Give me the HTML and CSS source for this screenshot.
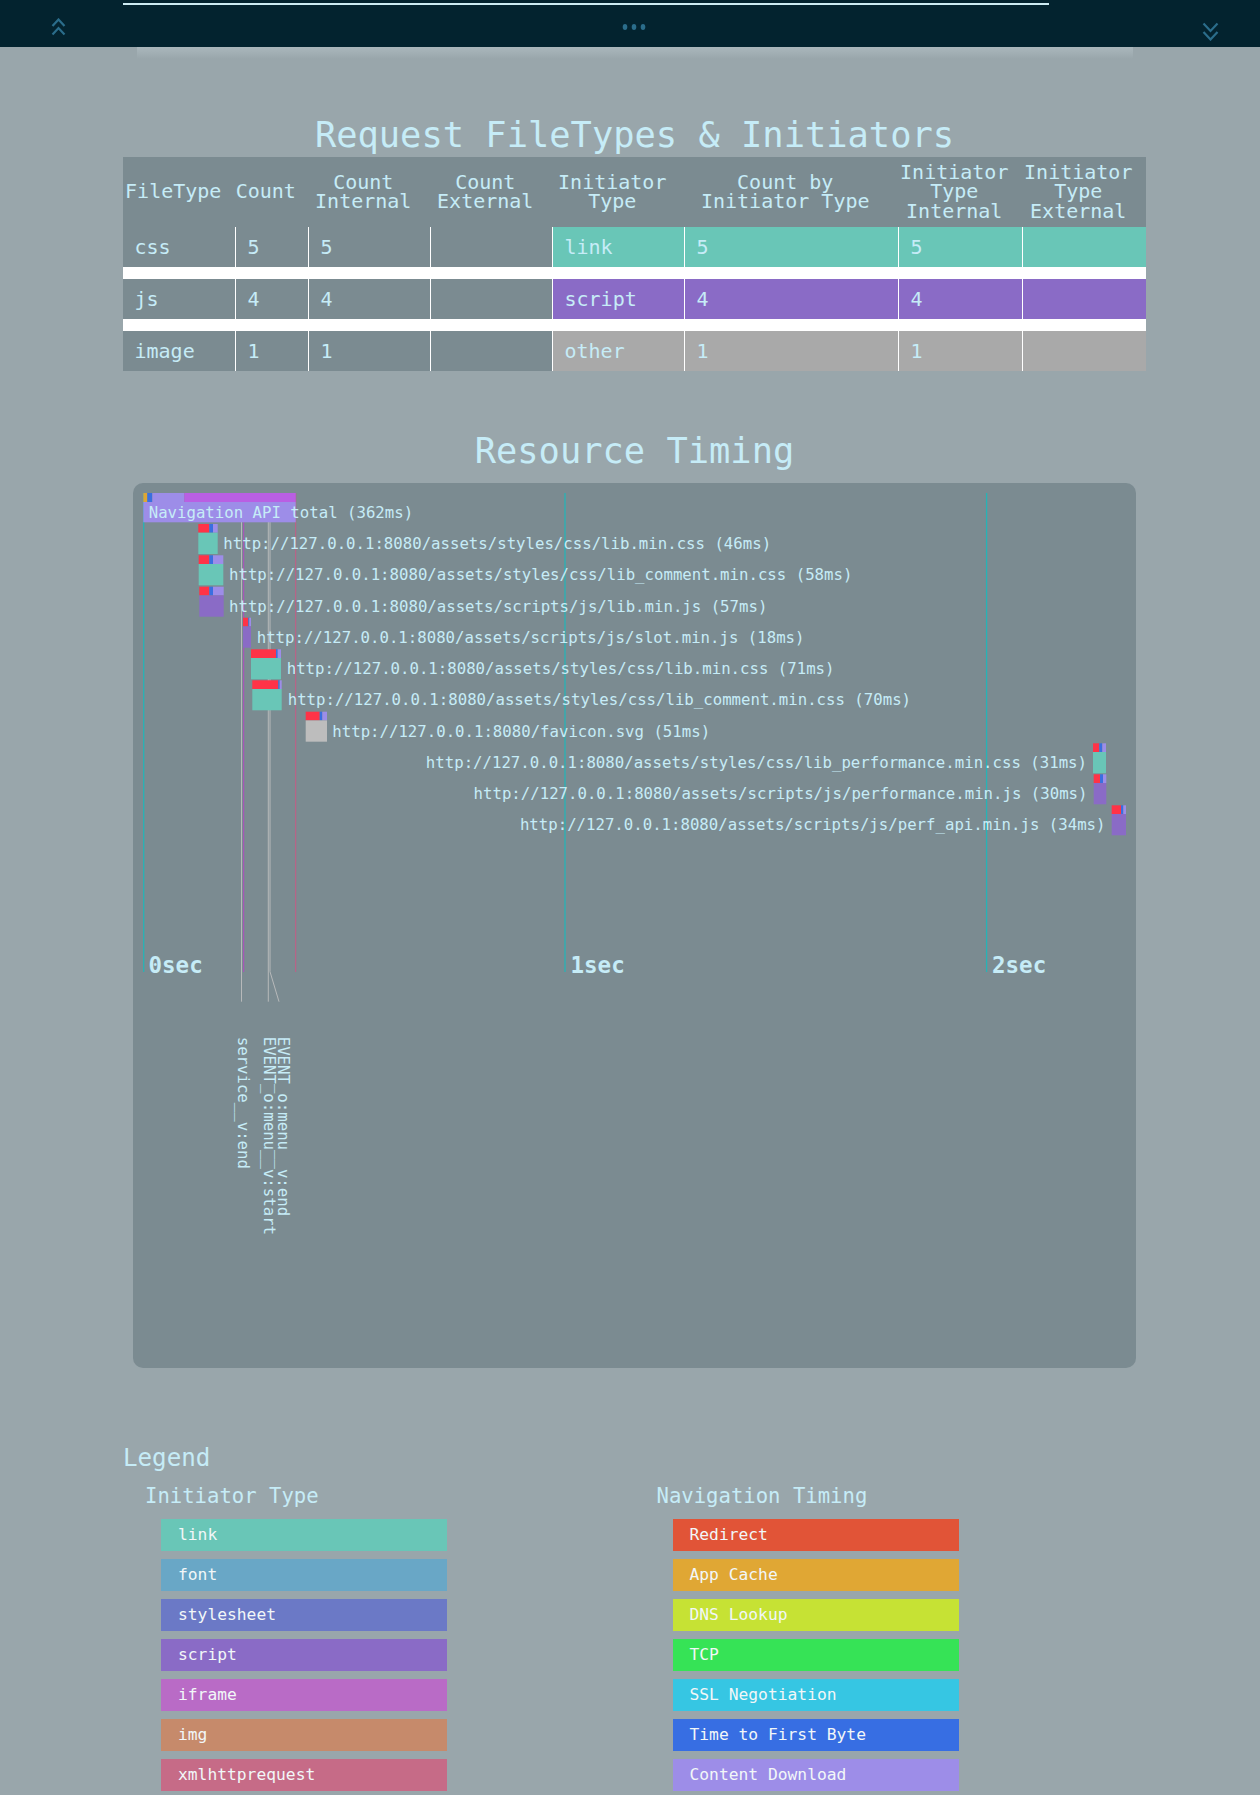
FILE: index.html
```html
<!DOCTYPE html>
<html lang="en">
<head>
<meta charset="utf-8">
<title>Performance</title>
<link rel="stylesheet" href="styles.css">
</head>
<body>
<header class="topbar">
  <div class="progress"></div>
  <div class="bar-row">
    <svg class="ic-up" viewBox="0 0 15 18"><path d="M1.5 8 L7.5 1.5 L13.5 8 M1.5 16.5 L7.5 10 L13.5 16.5" fill="none" stroke="#2b6d8b" stroke-width="2.2"/></svg>
    <svg class="ic-dots" viewBox="0 0 24 6"><ellipse cx="3" cy="3" rx="2.3" ry="3" fill="#2b6d8b"/><ellipse cx="12" cy="3" rx="2.3" ry="3" fill="#2b6d8b"/><ellipse cx="21" cy="3" rx="2.3" ry="3" fill="#2b6d8b"/></svg>
    <svg class="ic-down" viewBox="0 0 17 19"><path d="M1.5 1.5 L8.5 9 L15.5 1.5 M1.5 10 L8.5 17.5 L15.5 10" fill="none" stroke="#2b6d8b" stroke-width="2.2"/></svg>
  </div>
</header>
<div class="glow"></div>
<main class="content">
  <h2 class="title first">Request FileTypes &amp; Initiators</h2>
  <table class="types">
    <colgroup>
      <col class="c1"><col class="c2"><col class="c3"><col class="c4"><col class="c5"><col class="c6"><col class="c7"><col class="c8">
    </colgroup>
    <thead>
      <tr>
        <th>FileType</th><th>Count</th><th>Count Internal</th><th>Count External</th><th>Initiator Type</th><th>Count by Initiator Type</th><th>Initiator Type Internal</th><th>Initiator Type External</th>
      </tr>
    </thead>
    <tbody>
      <tr><td>css</td><td>5</td><td>5</td><td></td><td class="link">link</td><td class="link">5</td><td class="link">5</td><td class="link"></td></tr>
      <tr><td>js</td><td>4</td><td>4</td><td></td><td class="script">script</td><td class="script">4</td><td class="script">4</td><td class="script"></td></tr>
      <tr><td>image</td><td>1</td><td>1</td><td></td><td class="other">other</td><td class="other">1</td><td class="other">1</td><td class="other"></td></tr>
    </tbody>
  </table>

  <h2 class="title second">Resource Timing</h2>
  <div class="timeline">
    <svg class="chart" width="1003" height="885" viewBox="133 483 1003 885">
      <g class="marks">
        <line x1="143.7" y1="493" x2="143.7" y2="972" stroke="#27b3b6" stroke-width="1.3"/>
        <line x1="565" y1="493" x2="565" y2="972" stroke="#27b3b6" stroke-width="1.3"/>
        <line x1="986.6" y1="493" x2="986.6" y2="972" stroke="#27b3b6" stroke-width="1.3"/>
        <line x1="241.5" y1="493" x2="241.5" y2="1001.7" stroke="#b7b9ba" stroke-width="1"/>
        <line x1="243.7" y1="493" x2="243.7" y2="972" stroke="#b04dc2" stroke-width="1"/>
        <line x1="268.3" y1="493" x2="268.3" y2="1001.7" stroke="#b7b9ba" stroke-width="1"/>
        <polyline points="270,493 270,971.7 279,1001.7" fill="none" stroke="#b7b9ba" stroke-width="1"/>
        <line x1="295.7" y1="493" x2="295.7" y2="972" stroke="#c45c86" stroke-width="1"/>
      </g>

      <!-- navigation -->
      <rect x="143.3" y="493" width="4" height="9" fill="#e0a534"/>
      <rect x="147.3" y="493" width="5" height="9" fill="#3a6fe0"/>
      <rect x="152.3" y="493" width="32" height="9" fill="#9d8de8"/>
      <rect x="184.3" y="493" width="111.4" height="9" fill="#b95fe3"/>
      <rect x="143.3" y="502" width="152.4" height="20.3" fill="#9d8de8"/>
      <text class="lbl" x="148.7" y="517.5">Navigation API total (362ms)</text>

      <!-- row 1 -->
      <rect x="198.3" y="524" width="11" height="8.7" fill="#ff3347"/>
      <rect x="209.3" y="524" width="3.7" height="8.7" fill="#3a6fe0"/>
      <rect x="213" y="524" width="4.7" height="8.7" fill="#9d8de8"/>
      <rect x="198.3" y="532.7" width="19.4" height="21.3" fill="#69c6b7"/>
      <text class="lbl" x="223.3" y="549">http://127.0.0.1:8080/assets/styles/css/lib.min.css (46ms)</text>

      <!-- row 2 -->
      <rect x="198.7" y="555.3" width="10.6" height="8.7" fill="#ff3347"/>
      <rect x="209.3" y="555.3" width="3.7" height="8.7" fill="#3a6fe0"/>
      <rect x="213" y="555.3" width="10.3" height="8.7" fill="#9d8de8"/>
      <rect x="198.7" y="564" width="24.6" height="21.3" fill="#69c6b7"/>
      <text class="lbl" x="229" y="580.3">http://127.0.0.1:8080/assets/styles/css/lib_comment.min.css (58ms)</text>

      <!-- row 3 -->
      <rect x="199.3" y="586.7" width="10" height="8.7" fill="#ff3347"/>
      <rect x="209.3" y="586.7" width="3.7" height="8.7" fill="#3a6fe0"/>
      <rect x="213" y="586.7" width="10.7" height="8.7" fill="#9d8de8"/>
      <rect x="199.3" y="595.4" width="24.4" height="21.3" fill="#8a6bc6"/>
      <text class="lbl" x="229" y="611.7">http://127.0.0.1:8080/assets/scripts/js/lib.min.js (57ms)</text>

      <!-- row 4 -->
      <rect x="243" y="617.7" width="5.3" height="8.7" fill="#ff3347"/>
      <rect x="248.3" y="617.7" width="1" height="8.7" fill="#3a6fe0"/>
      <rect x="249.3" y="617.7" width="1.7" height="8.7" fill="#9d8de8"/>
      <rect x="243" y="626.4" width="8" height="21.3" fill="#8a6bc6"/>
      <text class="lbl" x="256.7" y="642.7">http://127.0.0.1:8080/assets/scripts/js/slot.min.js (18ms)</text>

      <!-- row 5 -->
      <rect x="251" y="649.3" width="25" height="8.7" fill="#ff3347"/>
      <rect x="276" y="649.3" width="1.7" height="8.7" fill="#3a6fe0"/>
      <rect x="277.7" y="649.3" width="3.3" height="8.7" fill="#9d8de8"/>
      <rect x="251" y="658" width="30" height="21.3" fill="#69c6b7"/>
      <text class="lbl" x="286.7" y="674.3">http://127.0.0.1:8080/assets/styles/css/lib.min.css (71ms)</text>

      <!-- row 6 -->
      <rect x="252.3" y="680.3" width="26" height="8.7" fill="#ff3347"/>
      <rect x="278.3" y="680.3" width="1.4" height="8.7" fill="#3a6fe0"/>
      <rect x="279.7" y="680.3" width="2" height="8.7" fill="#9d8de8"/>
      <rect x="252.3" y="689" width="29.4" height="21.3" fill="#69c6b7"/>
      <text class="lbl" x="287.7" y="705.3">http://127.0.0.1:8080/assets/styles/css/lib_comment.min.css (70ms)</text>

      <!-- row 7 -->
      <rect x="305.7" y="711.7" width="14" height="8.7" fill="#ff3347"/>
      <rect x="319.7" y="711.7" width="2.6" height="8.7" fill="#3a6fe0"/>
      <rect x="322.3" y="711.7" width="4.7" height="8.7" fill="#9d8de8"/>
      <rect x="305.7" y="720.4" width="21.3" height="21.3" fill="#bdbdbd"/>
      <text class="lbl" x="332.3" y="736.7">http://127.0.0.1:8080/favicon.svg (51ms)</text>

      <!-- row 8 -->
      <rect x="1093" y="743.3" width="6.3" height="8.7" fill="#ff3347"/>
      <rect x="1099.3" y="743.3" width="3" height="8.7" fill="#3a6fe0"/>
      <rect x="1102.3" y="743.3" width="3.7" height="8.7" fill="#9d8de8"/>
      <rect x="1093" y="752" width="13" height="21.3" fill="#69c6b7"/>
      <text class="lbl end" x="1087" y="768.3">http://127.0.0.1:8080/assets/styles/css/lib_performance.min.css (31ms)</text>

      <!-- row 9 -->
      <rect x="1093.7" y="774.3" width="6.3" height="8.7" fill="#ff3347"/>
      <rect x="1100" y="774.3" width="3" height="8.7" fill="#3a6fe0"/>
      <rect x="1103" y="774.3" width="3.3" height="8.7" fill="#9d8de8"/>
      <rect x="1093.7" y="783" width="12.6" height="21.3" fill="#8a6bc6"/>
      <text class="lbl end" x="1087.5" y="799.3">http://127.0.0.1:8080/assets/scripts/js/performance.min.js (30ms)</text>

      <!-- row 10 -->
      <rect x="1111.7" y="805.3" width="9.3" height="8.7" fill="#ff3347"/>
      <rect x="1121" y="805.3" width="2.3" height="8.7" fill="#3a6fe0"/>
      <rect x="1123.3" y="805.3" width="2.7" height="8.7" fill="#9d8de8"/>
      <rect x="1111.7" y="814" width="14.3" height="21.3" fill="#8a6bc6"/>
      <text class="lbl end" x="1105.5" y="830.3">http://127.0.0.1:8080/assets/scripts/js/perf_api.min.js (34ms)</text>

      <!-- seconds -->
      <text class="sec" x="148.5" y="973">0sec</text>
      <text class="sec" x="570.5" y="973">1sec</text>
      <text class="sec" x="992" y="973">2sec</text>

      <!-- marks labels -->
      <text class="lbl mark" transform="translate(238 1036.7) rotate(90)">service__v:end</text>
      <text class="lbl mark" transform="translate(264 1036.7) rotate(90)">EVENT_o:menu__v:start</text>
      <text class="lbl mark" transform="translate(277.5 1036.7) rotate(90)">EVENT_o:menu__v:end</text>
    </svg>
  </div>

  <section class="legend">
    <h3 class="legend-title">Legend</h3>
    <div class="legend-cols">
      <div class="legend-col">
        <h4 class="legend-sub">Initiator Type</h4>
        <ul class="legend-list">
          <li class="li-link">link</li>
          <li class="li-font">font</li>
          <li class="li-stylesheet">stylesheet</li>
          <li class="li-script">script</li>
          <li class="li-iframe">iframe</li>
          <li class="li-img">img</li>
          <li class="li-xhr">xmlhttprequest</li>
        </ul>
      </div>
      <div class="legend-col">
        <h4 class="legend-sub">Navigation Timing</h4>
        <ul class="legend-list">
          <li class="li-redirect">Redirect</li>
          <li class="li-appcache">App Cache</li>
          <li class="li-dns">DNS Lookup</li>
          <li class="li-tcp">TCP</li>
          <li class="li-ssl">SSL Negotiation</li>
          <li class="li-ttfb">Time to First Byte</li>
          <li class="li-download">Content Download</li>
        </ul>
      </div>
    </div>
  </section>
</main>
</body>
</html>
```

FILE: styles.css
```css
* { box-sizing: border-box; }

body {
  margin: 0;
  background: #99a6ab;
  color: #c6ecf7;
  font-family: "DejaVu Sans Mono", "Liberation Mono", monospace;
}

.topbar {
  height: 47px;
  background: #03232f;
  overflow: hidden;
}

.progress {
  margin: 3px 0 0 123px;
  width: 926px;
  height: 2px;
  background: #cdebf3;
}

.bar-row {
  display: flex;
  justify-content: space-between;
  align-items: flex-start;
  padding: 0 41px 0 51px;
}

.ic-up { display: block; width: 15px; height: 18px; margin-top: 13px; }
.ic-dots { display: block; width: 24px; height: 6px; margin-top: 19px; }
.ic-down { display: block; width: 17px; height: 19px; margin-top: 17px; }

.glow {
  height: 12px;
  margin: 0 127px 0 137px;
  background: linear-gradient(#aab7bc, rgba(153, 166, 171, 0));
}

.content {
  margin-left: 123px;
  width: 1023px;
}

.title {
  margin: 0;
  font-size: 35.4px;
  line-height: 42px;
  font-weight: normal;
  text-align: center;
}

.title.first { margin-top: 54.5px; }
.title.second { margin-top: 58.75px; }

.types {
  margin-top: 1.5px;
  width: 1023px;
  table-layout: fixed;
  border-collapse: separate;
  border-spacing: 0;
  background: #7b8b91;
  font-size: 20px;
}

.c1 { width: 112px; }
.c2 { width: 73px; }
.c3 { width: 122px; }
.c4 { width: 122px; }
.c5 { width: 132px; }
.c6 { width: 214px; }
.c7 { width: 124px; }
.c8 { width: 124px; }

.types th {
  height: 70px;
  padding: 0 11.5px 0 0;
  font-weight: normal;
  line-height: 19.3px;
  text-align: center;
  vertical-align: middle;
}

.types td {
  height: 40px;
  padding: 0 0 0 11.5px;
  text-align: left;
  vertical-align: middle;
  line-height: 24px;
}

.types tbody tr + tr td { border-top: 12px solid #fff; height: 52px; }
.types td + td { border-left: 1px solid #fff; }

.types td.link { background: #69c6b7; }
.types td.script { background: #8a6bc6; }
.types td.other { background: #a9a9a9; }

.timeline {
  margin: 11.25px 10px 0;
  height: 885px;
  background: #7b8b91;
  border-radius: 10px;
  overflow: hidden;
}

.chart { display: block; }

.lbl {
  font-family: "DejaVu Sans Mono", "Liberation Mono", monospace;
  font-size: 15.7px;
  fill: #c6ecf7;
}

.lbl.end { text-anchor: end; }

.sec {
  font-family: "DejaVu Sans Mono", "Liberation Mono", monospace;
  font-size: 22.5px;
  font-weight: bold;
  fill: #c6ecf7;
}

.legend { margin-top: 76.4px; }

.legend-title {
  margin: 0;
  font-size: 24.2px;
  line-height: 29px;
  font-weight: normal;
}

.legend-cols {
  display: grid;
  grid-template-columns: 1fr 1fr;
}

.legend-sub {
  margin: 10.8px 0 0;
  padding-left: 22px;
  font-size: 20.6px;
  line-height: 24px;
  font-weight: normal;
}

.legend-list {
  list-style: none;
  margin: 10.8px 0 0;
  padding: 0 0 0 38px;
}

.legend-list li {
  width: 286px;
  height: 31.7px;
  margin-bottom: 8.3px;
  padding-left: 17px;
  font-size: 16.3px;
  line-height: 31.7px;
  color: #f2f7f8;
}

.li-link { background: #69c6b7; }
.li-font { background: #69a7c6; }
.li-stylesheet { background: #6b79c6; }
.li-script { background: #8a6bc6; }
.li-iframe { background: #b96bc6; }
.li-img { background: #c68a6b; }
.li-xhr { background: #c66b87; }
.li-redirect { background: #e15437; }
.li-appcache { background: #e0a734; }
.li-dns { background: #c6e234; }
.li-tcp { background: #36e356; }
.li-ssl { background: #36c6e3; }
.li-ttfb { background: #376ee3; }
.li-download { background: #9d8de8; }
```
